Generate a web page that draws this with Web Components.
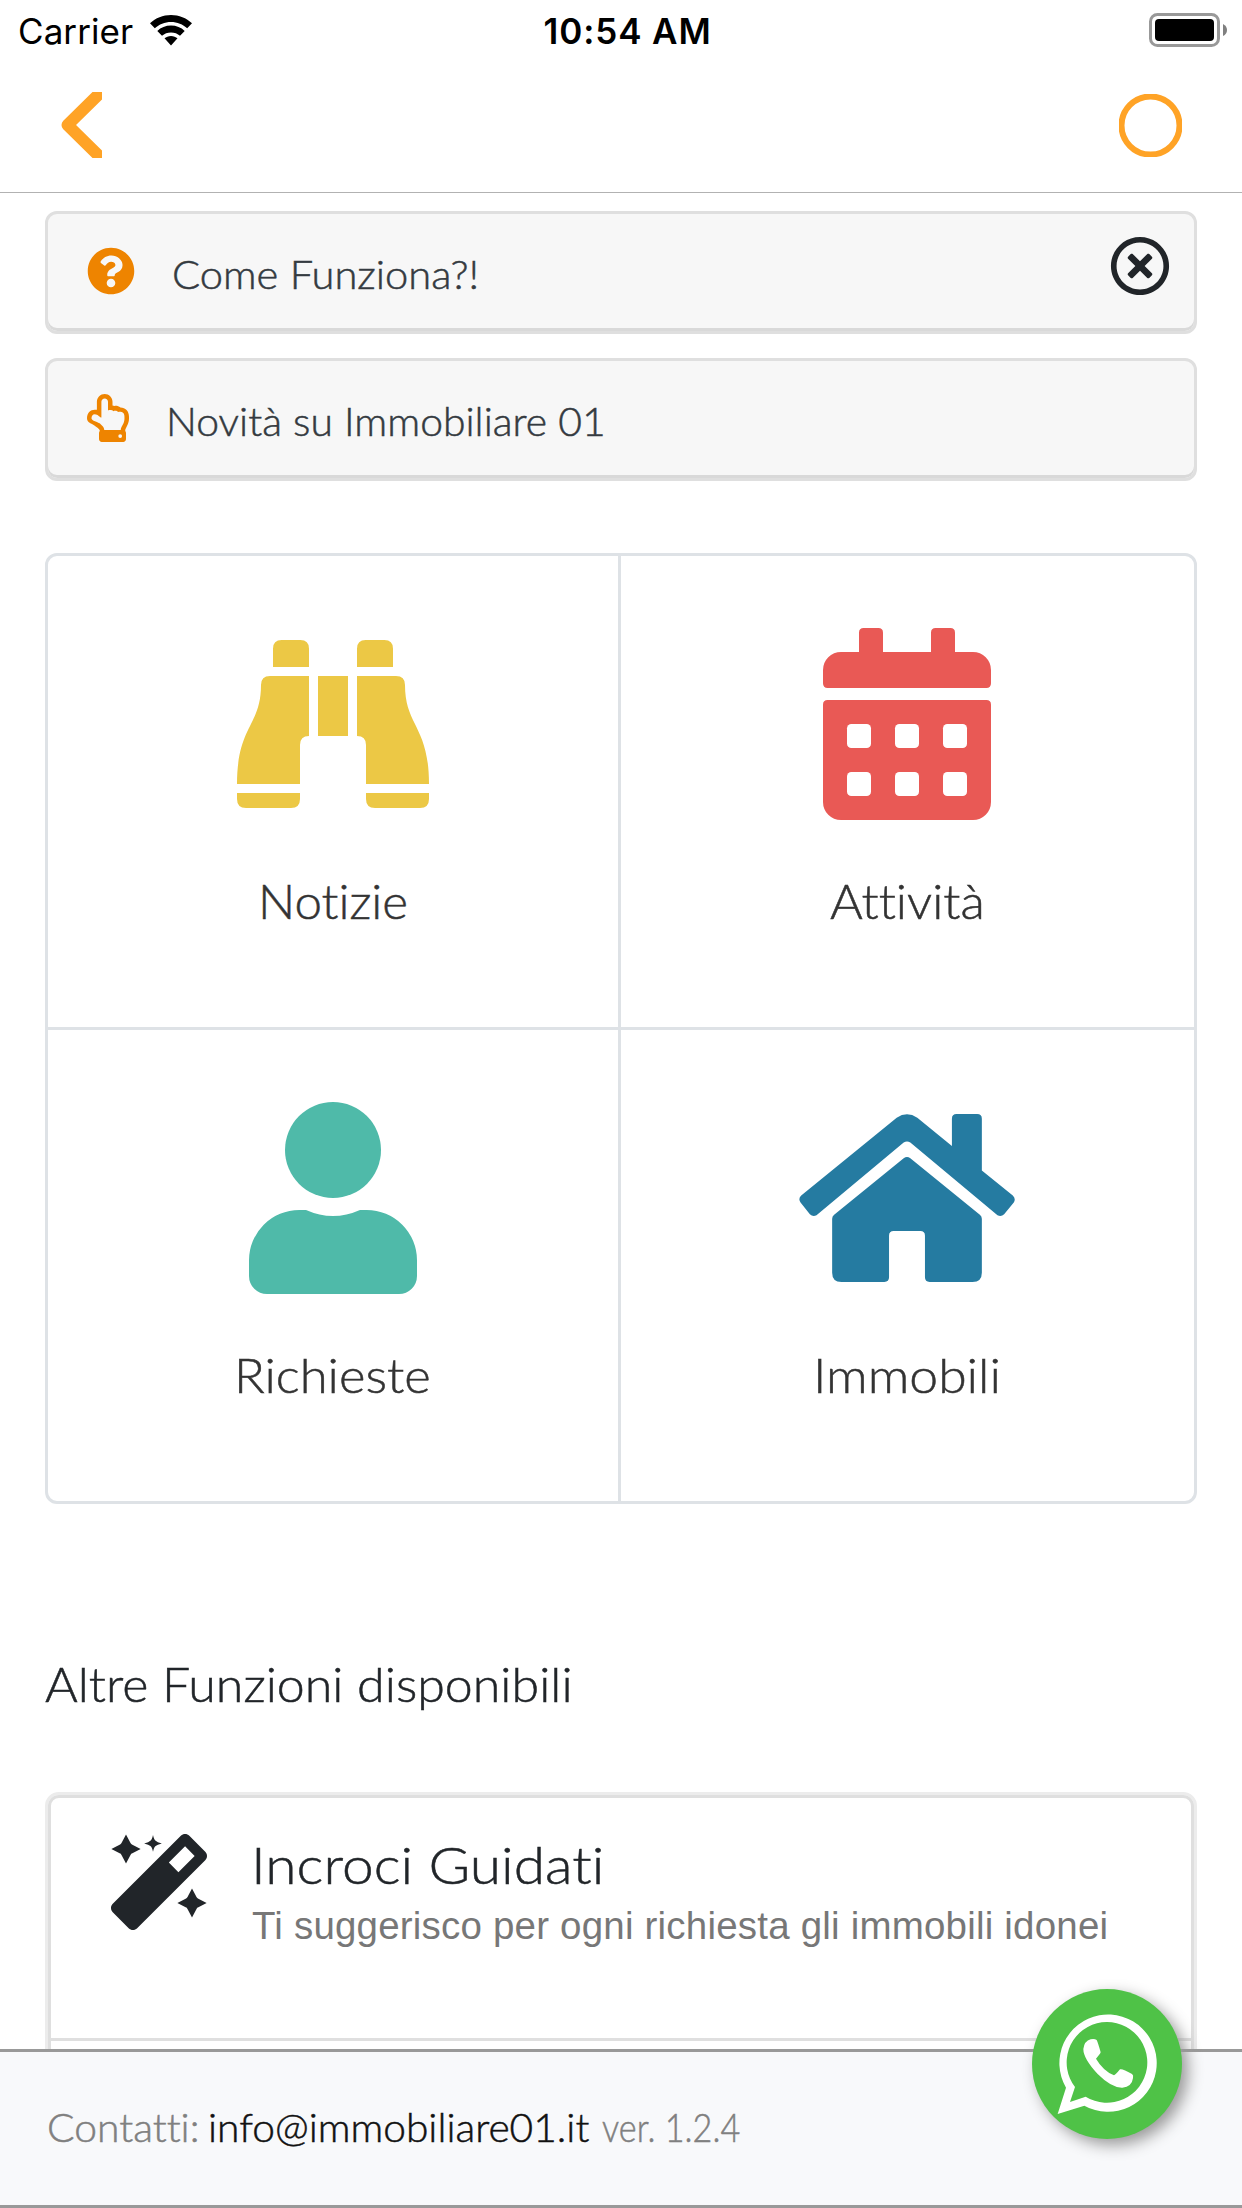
<!DOCTYPE html>
<html lang="it">
<head>
<meta charset="utf-8">
<title>Immobiliare 01</title>
<style>
html,body{margin:0;background:#fff}
body{width:1242px;height:2208px;overflow:hidden;font-family:Lato,sans-serif;font-weight:300;color:#212529;font-variant-ligatures:none}
</style>
</head>
<body>
<app-screen></app-screen>
<script>
const define = (name, css, html, setup) => customElements.define(name, class extends HTMLElement {
  constructor() {
    super();
    this.attachShadow({ mode: 'open' }).innerHTML = `<style>*{box-sizing:border-box}:host{display:block;box-sizing:border-box}svg{display:block}${css}</style>${html}`;
  }
  connectedCallback() { if (setup) setup(this); }
});

// Text whose visible glyphs span exactly the width given in "w":
// light display text is widened, other text is tracked.
define('fit-label', ':host{white-space:nowrap;flex:none;font-variant-ligatures:none}span{display:inline-block;transform-origin:0 50%}.wide{-webkit-text-stroke:.5px currentColor}', '<span><slot></slot></span>', el => {
  const text = el.textContent, w = +el.getAttribute('w'), cs = getComputedStyle(el);
  const c = document.createElement('canvas').getContext('2d');
  c.font = `${cs.fontWeight} ${cs.fontSize} ${cs.fontFamily}`;
  c.letterSpacing = '0.01px'; // a non-zero tracking turns ligatures off while measuring
  const m = c.measureText(text), ink = m.actualBoundingBoxLeft + m.actualBoundingBoxRight;
  const s = el.shadowRoot.querySelector('span');
  let k = 1;
  if (cs.fontWeight === '300') {
    k = w / ink;
    s.className = 'wide';
    s.style.letterSpacing = '0.01px';
    s.style.transform = `scaleX(${k})`;
  } else {
    s.style.letterSpacing = (w - ink) / (text.length - 1) + 'px';
  }
  s.style.marginLeft = m.actualBoundingBoxLeft * k + 'px';
  el.style.width = w + 'px';
});

define('status-bar', `:host{height:50px;display:grid;grid-template-columns:1fr auto 1fr;align-items:start;font:400 35px/62px Inter,sans-serif;color:#000;padding:0 15px 0 20px}
.l{display:flex;gap:17px}.l svg{margin-top:15px}.t{font-weight:600;margin-left:6px}.r{display:flex;justify-content:flex-end;padding-top:13px}`,
`<div class="l"><fit-label w="113">Carrier</fit-label><svg width="42" height="31" viewBox="0 0 42 31"><path d="M21 0C13 0 5.600 3 0 8.300L4.800 13.300C9.100 9.200 14.800 6.900 21 6.900S32.900 9.200 37.200 13.300L42 8.300C36.400 3 29 0 21 0zM21 10.600C15.700 10.600 10.900 12.600 7.300 15.900L12 20.700C14.400 18.600 17.500 17.400 21 17.400S27.600 18.600 30 20.700L34.700 15.900C31.100 12.600 26.300 10.600 21 10.600zM21 20.900C18.400 20.900 16.200 21.800 14.500 23.300L21 30.500 27.500 23.300C25.800 21.800 23.600 20.900 21 20.900z"/></svg></div>
<fit-label class="t" w="164">10:54 AM</fit-label>
<div class="r"><svg width="78" height="34" viewBox="0 0 78 34"><rect x="1.500" y="1.500" width="68" height="31" rx="7" fill="none" stroke="#999" stroke-width="3"/><rect x="6" y="6" width="59" height="22" rx="4"/><path d="M74 11q4 2 4 6t-4 6z" fill="#808080"/></svg></div>`);

define('nav-bar', `:host{height:143px;border-bottom:1px solid #b2b2b2;display:flex;justify-content:space-between;align-items:flex-start;padding:42px 60px 0 60px}.c{margin-top:2px}`,
`<svg width="42" height="66" viewBox="0 0 42 66"><path d="M38 3L7.500 33L38 63" fill="none" stroke="#ffa326" stroke-width="12" stroke-linecap="round" stroke-linejoin="round"/></svg>
<svg class="c" width="63" height="63" viewBox="0 0 63 63"><circle cx="31.500" cy="31.500" r="29" fill="none" stroke="#ffa326" stroke-width="6"/></svg>`);

define('info-bar', `:host{height:123px;border:3px solid #dfdfdf;border-radius:12px;background:#f7f7f7;box-shadow:inset 0 -3px #d9d9d9;display:flex;align-items:flex-start;padding:0 24px 0 39px;font-size:38.500px;line-height:120px;color:#343a40}
::slotted(svg){flex:none}::slotted([slot=icon]){margin-top:33px}::slotted([slot=end]){margin-left:auto;margin-top:22px}`,
`<slot name="icon"></slot><slot></slot><slot name="end"></slot>`);

define('menu-tile', `:host{display:flex;flex-direction:column;align-items:center;color:#333;font-size:46.500px;line-height:60px}
.i{height:192px;margin-top:72px;display:flex;align-items:center}.t{margin:51px 0 0 2px}`,
`<div class="i"><slot name="icon"></slot></div><div class="t"><slot></slot></div>`);

define('menu-grid', `:host{height:951px;border:3px solid #dee2e6;border-radius:12px;display:grid;grid-template:474px 1fr/573px 1fr;overflow:hidden}
.a{border-right:3px solid #dee2e6}.b{border-bottom:3px solid #dee2e6}.c menu-tile{width:572px}.act{margin-left:-5px}`,
`<div class="a b"><menu-tile>
<svg slot="icon" width="192" height="168" viewBox="51 60 576 504" fill="#ecc845"><path d="M159 141V86q0-26 26-26h56q26 0 26 26v55zM411 141V86q0-26 26-26h56q26 0 26 26v55zM294 168h90v180h-90zM267 168V348q-27 0-27 27V492H51C51 318 123 318 123 195q0-27 27-27zM411 168V348q27 0 27 27V492H627C627 318 555 318 555 195q0-27-27-27zM51 519H240v18q0 27-27 27H78q-27 0-27-27zM438 519H627v18q0 27-27 27H465q-27 0-27-27z"/></svg><fit-label w="144.500">Notizie</fit-label></menu-tile></div>
<div class="b c"><menu-tile>
<svg slot="icon" width="168" height="192" viewBox="99 54 504 576" fill="#e95955"><path fill-rule="evenodd" d="M99 220V180a54 54 0 0 1 54-54h54V68q0-14 14-14h44q14 0 14 14v58h144V68q0-14 14-14h44q14 0 14 14v58h54a54 54 0 0 1 54 54v40q0 14-14 14H113q-14 0-14-14zM99 284q0-14 14-14H589q14 0 14 14V576a54 54 0 0 1-54 54H153a54 54 0 0 1-54-54z"/><g fill="#fff"><rect x="171" y="342" width="72" height="72" rx="13"/><rect x="315" y="342" width="72" height="72" rx="13"/><rect x="459" y="342" width="72" height="72" rx="13"/><rect x="171" y="486" width="72" height="72" rx="13"/><rect x="315" y="486" width="72" height="72" rx="13"/><rect x="459" y="486" width="72" height="72" rx="13"/></g></svg><fit-label class="act" w="151">Attività</fit-label></menu-tile></div>
<div class="a"><menu-tile>
<svg slot="icon" width="168" height="192" viewBox="87 66 504 576" fill="#4fbaa9"><circle cx="339" cy="210" r="144"/><path d="M238 390H258Q339 426 420 390H440A151 151 0 0 1 591 541V588a54 54 0 0 1-54 54H141a54 54 0 0 1-54-54V541A151 151 0 0 1 238 390z"/></svg><fit-label w="191">Richieste</fit-label></menu-tile></div>
<div class="c"><menu-tile>
<svg slot="icon" width="216" height="168" viewBox="57 101 648 505" fill="#257ba1"><path d="M350 112Q381 91 412 112L516 197V115q0-14 14-14h62q14 0 14 14V271L699 346Q709 356 702 367L673 402Q664 411 653 405L391 187Q381 180 371 187L109 405Q98 411 89 402L61 367Q53 356 63 346z"/><path d="M371 234Q381 227 391 234L600 404Q606 409 606 416V578q0 28-28 28H449q-14 0-14-14V467q0-14-14-14H341q-14 0-14 14V592q0 14-14 14H184q-28 0-28-28V416Q156 409 162 404z"/></svg><fit-label w="181">Immobili</fit-label></menu-tile></div>`);

define('feature-list', `:host{height:500px;flex:none;border:3px solid #ececec;border-radius:14px}.in{height:100%;border:3px solid #dfdfdf;border-radius:11px}`,
`<div class="in"><slot></slot></div>`);
define('feature-row', `:host{height:243px;border-bottom:3px solid #dfdfdf;display:flex;padding:36px 0 0 60px}svg{flex:none}
.t{display:flex;flex-direction:column}.h{margin:-1px 0 0 49px;font-size:52px;line-height:62px}.s{margin:8px 0 0 45px;font:400 38.500px/46px "Liberation Sans",sans-serif;color:#777}`,
`<svg width="96" height="96" viewBox="0 0 512 512" fill="#212529"><path d="M224 5Q229 30 238 36Q246 45 271 50Q246 55 238 64Q229 70 224 95Q219 70 210 64Q202 55 177 50Q202 45 210 36Q219 30 224 5zM80 3L104 48Q107 55 114 57L158 80 114 103Q107 105 104 112L80 157 56 112Q53 105 46 103L2 80 46 57Q53 55 56 48zM432 291L456 336Q459 343 466 345L510 368 466 391Q459 393 456 400L432 445 408 400Q405 393 398 391L354 368 398 345Q405 343 408 336z"/><path fill-rule="evenodd" d="M502.620 94.230L417.770 9.380C411.530 3.120 403.340 0 395.150 0c-8.190 0-16.380 3.120-22.630 9.380L9.380 372.520c-12.500 12.500-12.500 32.760 0 45.250l84.850 84.850c6.250 6.250 14.440 9.370 22.620 9.370 8.190 0 16.380-3.120 22.630-9.370l363.140-363.150c12.500-12.480 12.500-32.750 0-45.240zM359.450 203.460l-50.910-50.910 86.600-86.600 50.910 50.910-86.600 86.600z"/></svg>
<div class="t"><fit-label class="h" w="345">Incroci Guidati</fit-label><fit-label class="s" w="854">Ti suggerisco per ogni richiesta gli immobili idonei</fit-label></div>`);

define('contact-bar', `:host{height:159px;flex:none;border-top:3px solid #999;border-bottom:3px solid #999;background:#f8f9fb;display:flex;padding-left:49px;font-size:38.500px;line-height:150px;color:#808080}
b{font-weight:300;color:#111;margin:0 13px 0 13px}`,
`<fit-label w="148">Contatti:</fit-label><b><fit-label w="379">info@immobiliare01.it</fit-label></b><fit-label w="138">ver. 1.2.4</fit-label>`);

define('whatsapp-button', `:host{position:absolute;left:1032px;top:1989px;width:150px;height:150px;border-radius:50%;background:#4fc247;box-shadow:6px 6px 15px #999}`,
`<svg width="150" height="150" viewBox="96 87 450 450"><path d="M173 462L198 383A146 146 0 1 1 253 437z" fill="#fff"/><path d="M210 426L225 381A121 121 0 1 1 257 410z" fill="#4fc247"/><path d="M272 238Q283 235 290 240Q294 248 302 277Q300 283 288 296Q309 332 342 346Q348 343 360 328Q367 325 396 342Q401 345 399 354Q396 380 367 383Q335 384 293 342Q250 296 250 267Q253 243 272 238z" fill="#fff"/></svg>`);

define('app-screen', `:host{display:flex;flex-direction:column;width:1242px;height:2208px;overflow:hidden;position:relative;background:#fff}
main{height:1856px;flex:none;overflow:hidden;padding:18px 45px 0;display:flex;flex-direction:column}
info-bar{flex:none;margin-bottom:24px}menu-grid{flex:none;margin-top:48px}h2{margin:150px 0 0 0;font-size:46.500px;line-height:60px;height:60px;font-weight:300}feature-list{margin-top:78px}`,
`<status-bar></status-bar><nav-bar></nav-bar>
<main>
<info-bar><svg slot="icon" width="48" height="48" viewBox="0 0 512 512" fill="#ee8400"><path d="M504 256c0 136.997-111.043 248-248 248S8 392.997 8 256C8 119.083 119.043 8 256 8s248 111.083 248 248zM262.655 90c-54.497 0-89.255 22.957-116.549 63.758-3.536 5.286-2.353 12.415 2.715 16.258l34.699 26.310c5.205 3.947 12.621 3.008 16.665-2.122 17.864-22.658 30.113-35.797 57.303-35.797 20.429 0 45.698 13.148 45.698 32.958 0 14.976-12.363 22.667-32.534 33.976C247.128 238.528 216 254.941 216 296v4c0 6.627 5.373 12 12 12h56c6.627 0 12-5.373 12-12v-1.333c0-28.462 83.186-29.647 83.186-106.667 0-58.002-60.165-102-116.531-102zM256 338c-25.365 0-46 20.635-46 46 0 25.364 20.635 46 46 46s46-20.636 46-46c0-25.365-20.635-46-46-46z"/></svg><fit-label w="302" style="margin:0 0 0 39px">Come Funziona?!</fit-label><svg slot="end" width="60" height="60" viewBox="0 0 512 512" fill="#212529"><path d="M256 8C119 8 8 119 8 256s111 248 248 248 248-111 248-248S393 8 256 8zm0 448c-110.500 0-200-89.500-200-200S145.500 56 256 56s200 89.500 200 200-89.500 200-200 200zm101.800-262.200L295.600 256l62.200 62.200c4.700 4.700 4.700 12.300 0 17l-22.600 22.600c-4.700 4.700-12.300 4.700-17 0L256 295.600l-62.200 62.200c-4.700 4.700-12.300 4.700-17 0l-22.600-22.600c-4.700-4.700-4.700-12.300 0-17l62.200-62.200-62.200-62.200c-4.700-4.700-4.700-12.300 0-17l22.600-22.600c4.700-4.700 12.300-4.700 17 0l62.200 62.200 62.200-62.200c4.700-4.700 12.300-4.700 17 0l22.600 22.600c4.700 4.700 4.700 12.300 0 17z"/></svg></info-bar>
<info-bar><svg slot="icon" width="42" height="48" viewBox="0 0 448 512" fill="#ee8400"><path fill-rule="evenodd" d="M105.600 83.200V169c-7-1.400-14.600-2.200-22.400-2.200C35.300 167 0 202 0 259c0 45.300 48.500 57 78.800 75.700 12.400 7.700 23.300 17 33.300 25.900C129.800 376.300 136 384.200 136 391.200v2.700c-5 5.700-8 13.500-8 22.100v64c0 17.700 12.900 32 28.800 32h230.400c15.900 0 28.800-14.300 28.800-32v-64c0-8.600-3-16.400-8-22.100V391.200c0-28.700 40-67 40-127.200v-21.300c0-62.500-38.700-98.800-91.100-99.900-17.800-12.500-40.800-18.500-62.100-15.600L272 123V83.200C272 38 234 0 188.800 0c-45.500 0-83.200 37.700-83.200 83.200zM153.600 83.200c0-19.200 16-35.200 35.200-35.200s35.200 16 35.200 35.200v92c17-5 42-6 57.600 8c14-9 40-6 50 8c22-4 68-8 68 51V264c0 55-39 82-40 120H184c0-32-34-57-50-71C100 292 48 285 48 259c0-26 12-44 35-44c35 0 53 35 70.600 35zM354 428a20 20 0 1 0 0 40a20 20 0 1 0 0-40z"/></svg><fit-label w="433" style="margin:0 0 0 41px">Novità su Immobiliare 01</fit-label></info-bar>
<menu-grid></menu-grid>
<h2><fit-label w="525">Altre Funzioni disponibili</fit-label></h2>
<feature-list><feature-row></feature-row></feature-list>
</main>
<contact-bar></contact-bar><whatsapp-button></whatsapp-button>`);
</script>
</body>
</html>
